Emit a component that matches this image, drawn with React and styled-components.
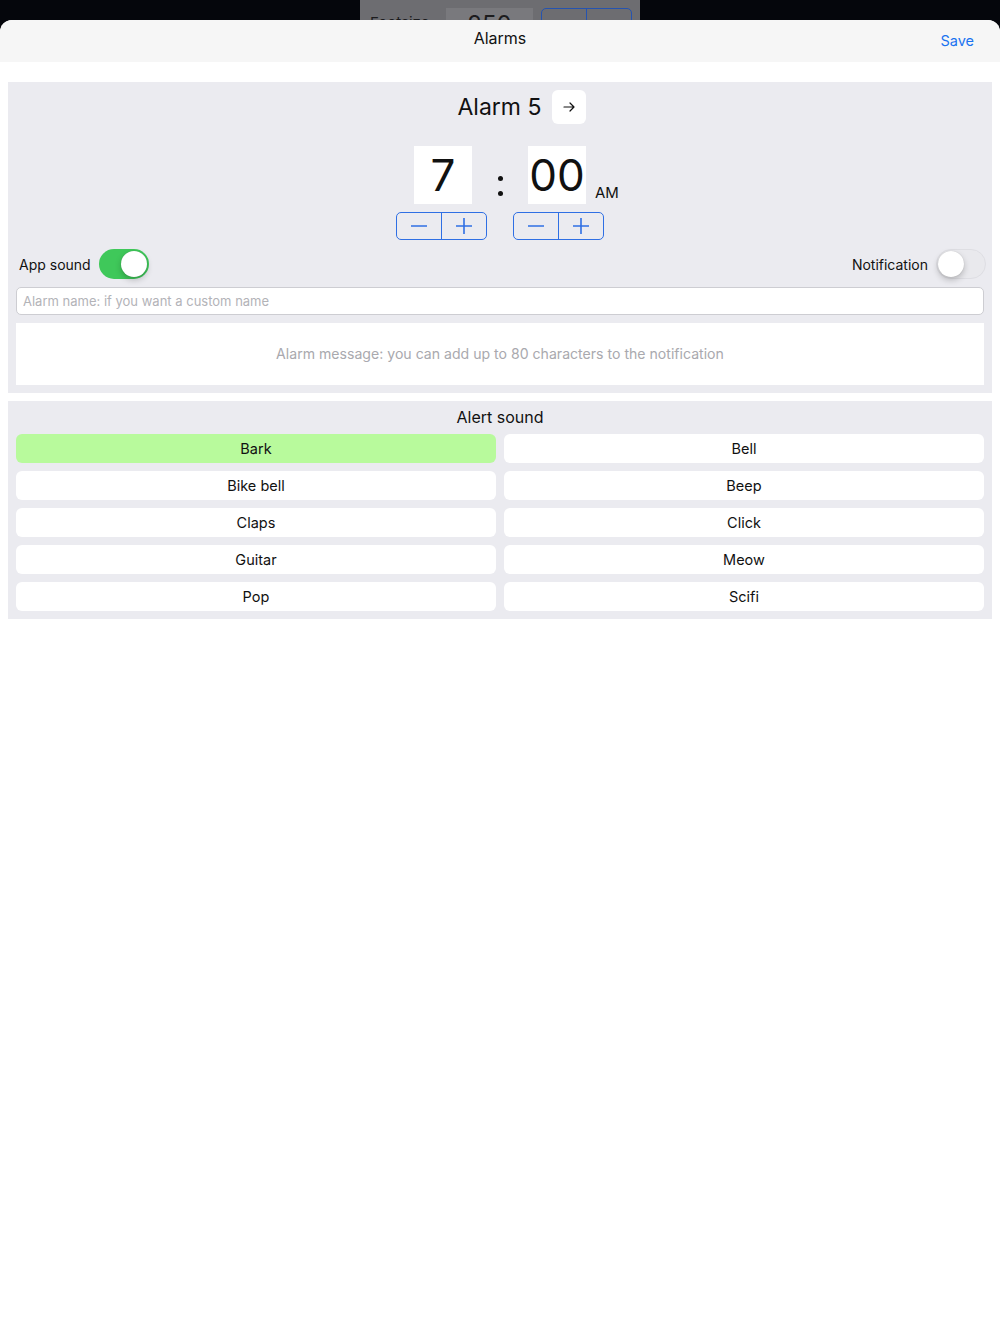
import React from "react";
import styled, { createGlobalStyle } from "styled-components";

const GlobalStyle = createGlobalStyle`
  html, body {
    margin: 0;
    padding: 0;
    background: #05060c;
  }
  body {
    font-family: Inter, "Noto Sans", "Liberation Sans", sans-serif;
    color: #111;
  }
  * {
    box-sizing: border-box;
  }
`;

const Screen = styled.div`
  min-height: 100vh;
  display: flex;
  flex-direction: column;
`;

const Backdrop = styled.div`
  height: 20px;
  overflow: hidden;
  display: flex;
  justify-content: center;
`;

const PeekCard = styled.div`
  width: 280px;
  height: 20px;
  overflow: hidden;
  background: #6d6d71;
  display: flex;
  align-items: flex-start;
  padding: 8px 8px 0 10px;
  gap: 8px;
`;

const PeekLabel = styled.span`
  width: 68px;
  padding-top: 6px;
  font-size: 15px;
  line-height: 18px;
  color: #1c1c1e;
`;

const PeekValue = styled.div`
  width: 87px;
  height: 30px;
  background: #79797d;
  font-size: 24px;
  line-height: 30px;
  padding-top: 2px;
  text-align: center;
  color: #1c1c1e;
`;

const PeekStepper = styled.div`
  width: 91px;
  height: 28px;
  border: 1px solid #2553b0;
  border-radius: 5px;
  display: flex;
  & > span + span {
    border-left: 1px solid #2553b0;
  }
`;

const PeekHalf = styled.span`
  flex: 1;
`;

const Sheet = styled.div`
  flex: 1;
  background: #fff;
  border-radius: 12px 12px 0 0;
  overflow: hidden;
`;

const Header = styled.header`
  height: 42px;
  background: #f6f6f6;
  position: relative;
  display: flex;
  justify-content: center;
  align-items: center;
`;

const HeaderTitle = styled.h1`
  margin: 0 0 6px;
  font-size: 16px;
  font-weight: 400;
  color: #111;
`;

const SaveButton = styled.button`
  position: absolute;
  right: 26px;
  top: 12px;
  border: 0;
  background: none;
  padding: 0;
  font-family: inherit;
  font-size: 14.5px;
  color: #1a73f0;
  cursor: pointer;
`;

const Body = styled.main`
  padding: 20px 8px;
  display: flex;
  flex-direction: column;
  gap: 8px;
`;

const Panel = styled.section`
  background: #ebebf0;
  padding: 8px;
  display: flex;
  flex-direction: column;
`;

const TitleRow = styled.div`
  display: flex;
  justify-content: center;
  align-items: center;
  gap: 11px;
  padding-left: 44px;
`;

const AlarmTitle = styled.h2`
  margin: 0;
  font-size: 23px;
  font-weight: 400;
  color: #111;
`;

const ArrowButton = styled.button`
  width: 34px;
  height: 34px;
  border: 0;
  border-radius: 6px;
  background: #fff;
  display: flex;
  align-items: center;
  justify-content: center;
  padding: 0;
  color: #111;
`;

const TimeRow = styled.div`
  margin-top: 22px;
  display: flex;
  justify-content: center;
`;

const TimeColumn = styled.div`
  width: 91px;
  display: flex;
  flex-direction: column;
  align-items: center;
  gap: 8px;
`;

const DigitBox = styled.div`
  position: relative;
  width: 58px;
  height: 58px;
  background: #fff;
  display: flex;
  align-items: center;
  justify-content: center;
  font-size: 44px;
  font-weight: 400;
  color: #111;
  margin-left: ${(p) => p.$shift || 0}px;
`;

const Meridiem = styled.span`
  position: absolute;
  left: calc(100% + 9px);
  bottom: 1px;
  font-size: 15px;
  line-height: 20px;
  color: #111;
`;

const Colon = styled.div`
  width: 26px;
  height: 58px;
  display: flex;
  flex-direction: column;
  align-items: center;
  justify-content: center;
  gap: 10px;
  padding-top: 21px;
  & > i {
    width: 5px;
    height: 5px;
    border-radius: 50%;
    background: #111;
  }
`;

const Stepper = styled.div`
  width: 91px;
  height: 28px;
  border: 1px solid #2f6fe4;
  border-radius: 5px;
  display: flex;
  overflow: hidden;
`;

const StepButton = styled.button`
  flex: 1;
  border: 0;
  background: transparent;
  padding: 0;
  display: flex;
  align-items: center;
  justify-content: center;
  & + & {
    border-left: 1px solid #2f6fe4;
  }
`;

const SwitchRow = styled.div`
  margin-top: 9px;
  display: flex;
  align-items: center;
  justify-content: space-between;
  padding-left: 3px;
`;

const SwitchGroup = styled.label`
  display: flex;
  align-items: center;
  gap: 8px;
  font-size: 14px;
  color: #111;
  margin-right: ${(p) => (p.$right ? "-2px" : "0")};
`;

const Track = styled.span`
  position: relative;
  width: 50px;
  height: 30px;
  border-radius: 15px;
  background: ${(p) => (p.$on ? "#3fc85a" : "#e9e9ed")};
  border: ${(p) => (p.$on ? "0" : "1px solid #dedee3")};
`;

const Knob = styled.span`
  position: absolute;
  top: ${(p) => (p.$on ? "2px" : "1px")};
  left: ${(p) => (p.$on ? "22px" : "1px")};
  width: 26px;
  height: 26px;
  border-radius: 50%;
  background: #fff;
  box-shadow: 0 3px 6px rgba(0, 0, 0, 0.22), 0 0 1px rgba(0, 0, 0, 0.2);
`;

const NameInput = styled.input`
  margin-top: 8px;
  height: 28px;
  width: 100%;
  border: 1px solid #cdcdd2;
  border-radius: 5px;
  background: #fff;
  padding: 0 6px;
  font-family: inherit;
  font-size: 13px;
  color: #111;
  &::placeholder {
    color: #b3b3b8;
  }
`;

const MessageBox = styled.textarea`
  margin-top: 8px;
  height: 62px;
  width: 100%;
  border: 0;
  background: #fff;
  resize: none;
  padding: 22px 8px 0;
  text-align: center;
  font-family: inherit;
  font-size: 14.1px;
  line-height: 18px;
  color: #111;
  &::placeholder {
    color: #a9a9ae;
  }
`;

const SectionTitle = styled.h3`
  margin: 0 0 8px;
  text-align: center;
  font-size: 16px;
  font-weight: 400;
  line-height: 17px;
  color: #111;
`;

const SoundGrid = styled.div`
  display: grid;
  grid-template-columns: 1fr 1fr;
  gap: 8px;
`;

const SoundButton = styled.button`
  height: 29px;
  border: 0;
  border-radius: 6px;
  background: ${(p) => (p.$active ? "#b8fa9c" : "#fff")};
  font-family: inherit;
  font-size: 14.5px;
  color: #111;
  cursor: pointer;
`;

const sounds = [
  "Bark",
  "Bell",
  "Bike bell",
  "Beep",
  "Claps",
  "Click",
  "Guitar",
  "Meow",
  "Pop",
  "Scifi",
];

function MinusIcon() {
  return (
    <svg width="16" height="16" viewBox="0 0 16 16">
      <line x1="0" y1="8" x2="16" y2="8" stroke="#2f6fe4" strokeWidth="1.6" />
    </svg>
  );
}

function PlusIcon() {
  return (
    <svg width="16" height="16" viewBox="0 0 16 16">
      <line x1="0" y1="8" x2="16" y2="8" stroke="#2f6fe4" strokeWidth="1.6" />
      <line x1="8" y1="0" x2="8" y2="16" stroke="#2f6fe4" strokeWidth="1.6" />
    </svg>
  );
}

function ArrowIcon() {
  return (
    <svg width="12" height="10" viewBox="0 0 12 10" fill="none">
      <path
        d="M1 5h10M7 1l4 4-4 4"
        stroke="#111"
        strokeWidth="1.2"
        strokeLinecap="round"
        strokeLinejoin="round"
      />
    </svg>
  );
}

function TimeStepper() {
  return (
    <Stepper>
      <StepButton aria-label="decrease">
        <MinusIcon />
      </StepButton>
      <StepButton aria-label="increase">
        <PlusIcon />
      </StepButton>
    </Stepper>
  );
}

function Switch({ on }) {
  return (
    <Track $on={on}>
      <Knob $on={on} />
    </Track>
  );
}

export default function App() {
  const [selected, setSelected] = React.useState("Bark");

  return (
    <Screen>
      <GlobalStyle />
      <Backdrop>
        <PeekCard>
          <PeekLabel>Footsize</PeekLabel>
          <PeekValue>250</PeekValue>
          <PeekStepper>
            <PeekHalf />
            <PeekHalf />
          </PeekStepper>
        </PeekCard>
      </Backdrop>
      <Sheet>
        <Header>
          <HeaderTitle>Alarms</HeaderTitle>
          <SaveButton>Save</SaveButton>
        </Header>
        <Body>
          <Panel>
            <TitleRow>
              <AlarmTitle>Alarm 5</AlarmTitle>
              <ArrowButton aria-label="next alarm">
                <ArrowIcon />
              </ArrowButton>
            </TitleRow>
            <TimeRow>
              <TimeColumn>
                <DigitBox $shift={3}>7</DigitBox>
                <TimeStepper />
              </TimeColumn>
              <Colon>
                <i />
                <i />
              </Colon>
              <TimeColumn>
                <DigitBox $shift={-3}>
                  00
                  <Meridiem>AM</Meridiem>
                </DigitBox>
                <TimeStepper />
              </TimeColumn>
            </TimeRow>
            <SwitchRow>
              <SwitchGroup>
                App sound
                <Switch on />
              </SwitchGroup>
              <SwitchGroup $right>
                Notification
                <Switch on={false} />
              </SwitchGroup>
            </SwitchRow>
            <NameInput placeholder="Alarm name: if you want a custom name" />
            <MessageBox placeholder="Alarm message: you can add up to 80 characters to the notification" />
          </Panel>
          <Panel>
            <SectionTitle>Alert sound</SectionTitle>
            <SoundGrid>
              {sounds.map((name) => (
                <SoundButton
                  key={name}
                  $active={name === selected}
                  onClick={() => setSelected(name)}
                >
                  {name}
                </SoundButton>
              ))}
            </SoundGrid>
          </Panel>
        </Body>
      </Sheet>
    </Screen>
  );
}
